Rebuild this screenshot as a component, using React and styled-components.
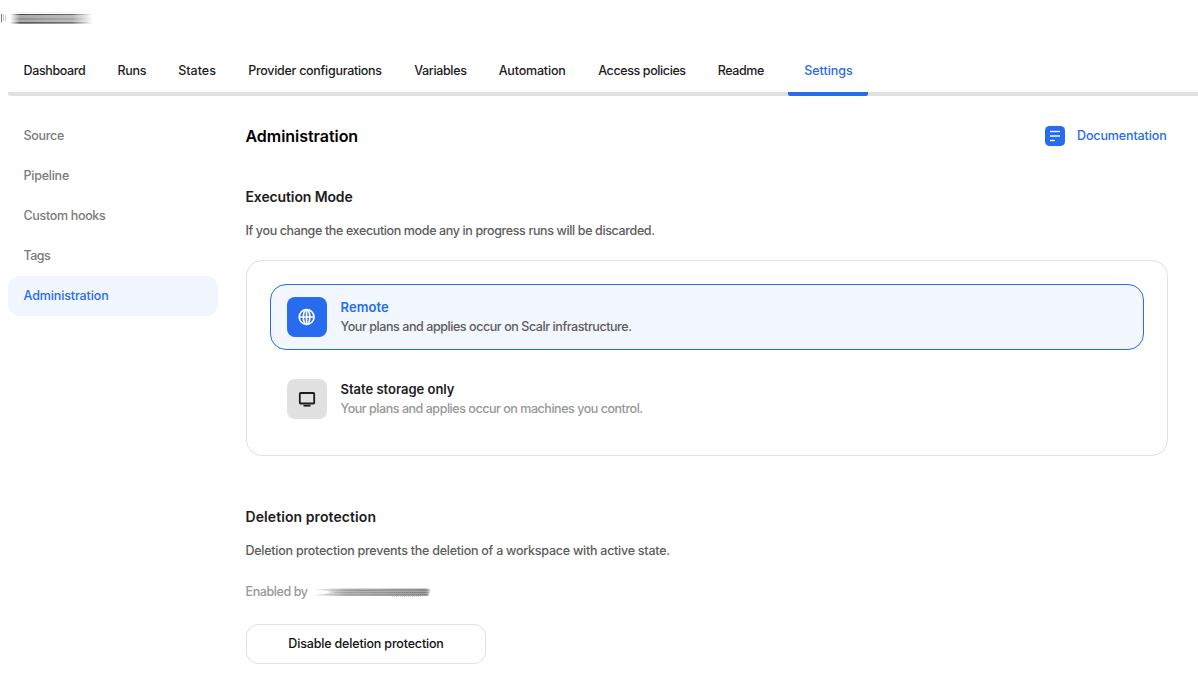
import React from "react";
import styled, { createGlobalStyle } from "styled-components";

const Global = createGlobalStyle`
  * { box-sizing: border-box; }
  body { margin: 0; background: #fff; font-family: Inter, "Liberation Sans", sans-serif; font-size: 12.5px; font-weight: 500; color: #1c1c1e; }
`;

const Page = styled.div`
  height: 690px;
  overflow: hidden;
`;
const Header = styled.header`
  height: 50px;
  padding-top: 10px;
`;
const Tabs = styled.nav`
  display: flex;
  gap: 32px;
  height: 46px;
  margin-left: 8px;
  padding-left: 15.5px;
  border-radius: 2px 0 0 2px;
  background: linear-gradient(#e1e1e1, #e1e1e1) bottom / 100% 4px no-repeat;
`;
const Text = styled.span`
  display: block;
  white-space: nowrap;
  letter-spacing: ${(p) => p.$ls || 0}px;
`;
const RaisedText = styled(Text)`
  padding-bottom: 2px;
`;
const Tab = styled.a`
  width: ${(p) => p.$w}px;
  height: 46px;
  line-height: 42px;
  color: #1c1c1e;
`;
const ActiveTab = styled(Tab)`
  width: 80px;
  margin-left: -8px;
  padding-left: 16px;
  color: #266ced;
  background: linear-gradient(#266ced, #266ced) bottom / 100% 4px no-repeat;
  border-radius: 2px;
`;
const Body = styled.div`
  display: flex;
  padding: 20px 30px 0 8px;
`;
const Side = styled.aside`
  width: 210px;
  margin-right: 28px;
`;
const SideItem = styled.a`
  display: block;
  height: 40px;
  line-height: 40px;
  padding-left: 15.5px;
  border-radius: 12px;
  color: ${(p) => (p.$active ? "#266ced" : "#7b7b7b")};
  background: ${(p) => (p.$active ? "#f0f5fe" : "transparent")};
`;
const Main = styled.main`
  flex: 1;
`;
const TitleRow = styled.div`
  display: flex;
  align-items: center;
  justify-content: space-between;
  height: 40px;
`;
const Title = styled.h1`
  margin: 0 0 0 -0.5px;
  font-size: 16px;
  font-weight: 600;
  color: #000;
`;
const DocLink = styled.a`
  display: flex;
  align-items: center;
  gap: 12px;
  width: 123px;
  color: #266ced;
`;
const Heading = styled.h2`
  margin: ${(p) => p.$top}px 0 0 -0.5px;
  font-size: 14px;
  font-weight: 600;
  line-height: 20px;
`;
const Para = styled.p`
  margin: 14px 0 0 -0.5px;
  line-height: 20px;
  color: #5c5c5c;
`;
const Panel = styled.section`
  height: 196px;
  margin-top: 19px;
  padding: 23px;
  border: 1px solid #e1e1e1;
  border-radius: 16px;
`;
const Option = styled.div`
  display: flex;
  align-items: center;
  gap: 13.5px;
  height: 66px;
  margin-bottom: 16px;
  padding: 0 16px;
  border: 1px solid ${(p) => (p.$active ? "#266ced" : "transparent")};
  border-radius: 16px;
  background: ${(p) => (p.$active ? "#f2f6fe" : "transparent")};
`;
const IconBox = styled.div`
  display: flex;
  align-items: center;
  justify-content: center;
  width: 40px;
  height: 40px;
  border-radius: 8px;
  background: ${(p) => (p.$active ? "#266ced" : "#e1e1e1")};
`;
const OptionTitle = styled.div`
  font-size: 13px;
  font-weight: 600;
  line-height: 19px;
  color: ${(p) => (p.$active ? "#266ced" : "#1c1c1e")};
`;
const OptionText = styled.div`
  line-height: 19px;
  color: ${(p) => (p.$active ? "#5c5c5c" : "#979797")};
`;
const EnabledRow = styled.div`
  display: flex;
  align-items: center;
  height: 20px;
  margin: 21px 0 0 -0.5px;
  color: #979797;
`;
const EnabledLabel = styled.div`
  width: 68px;
`;
const Button = styled.button`
  display: flex;
  align-items: center;
  justify-content: center;
  width: 240px;
  height: 40px;
  margin-top: 22px;
  border: 1px solid #e1e1e1;
  border-radius: 12px;
  background: #fff;
  font: inherit;
  color: #111;
`;

const TABS = [
  ["Dashboard", 62, -0.36],
  ["Runs", 28.7, -0.3],
  ["States", 38, 0],
  ["Provider configurations", 134, -0.28],
  ["Variables", 52.5, -0.35],
  ["Automation", 67.5, -0.18],
  ["Access policies", 87.5, -0.39],
  ["Readme", 46.5, -0.4],
];
const SIDE = [
  ["Source", -0.3],
  ["Pipeline", -0.24],
  ["Custom hooks", -0.33],
  ["Tags", -0.5],
  ["Administration", -0.12],
];

const NameSmudge = () => (
  <svg width="96" height="18" viewBox="0 0 96 18" style={{ display: "block" }}>
    <defs>
      <linearGradient id="nameFade" x1="0" x2="1">
        <stop offset="0" stopColor="#fff" stopOpacity="0" />
        <stop offset="0.12" stopColor="#fff" />
        <stop offset="0.75" stopColor="#fff" stopOpacity="0.8" />
        <stop offset="1" stopColor="#fff" stopOpacity="0" />
      </linearGradient>
      <mask id="nameMask"><rect x="10" width="83" height="18" fill="url(#nameFade)" /></mask>
    </defs>
    <path d="M1.5 4v8" stroke="#777" strokeWidth="1" />
    <path d="M3.5 4v7M5.5 5v6" stroke="#ccc" strokeWidth="1" />
    <g mask="url(#nameMask)">
      <rect x="10" y="2" width="83" height="1" fill="#eee" />
      <rect x="10" y="4" width="83" height="1" fill="#444" />
      <rect x="10" y="5" width="83" height="3" fill="#aaa" />
      <rect x="10" y="8" width="83" height="2" fill="#929292" />
      <rect x="10" y="10" width="83" height="2" fill="#aaa" />
      <rect x="10" y="12" width="83" height="1" fill="#555" />
      <rect x="10" y="13" width="83" height="1" fill="#888" />
    </g>
  </svg>
);
const UserSmudge = () => (
  <svg width="120" height="14" viewBox="0 0 120 14">
    <defs>
      <linearGradient id="userFade" x1="0" x2="1">
        <stop offset="0" stopColor="#fff" stopOpacity="0.1" />
        <stop offset="0.25" stopColor="#fff" stopOpacity="0.75" />
        <stop offset="0.95" stopColor="#fff" />
        <stop offset="1" stopColor="#fff" stopOpacity="0" />
      </linearGradient>
      <mask id="userMask"><rect x="2" width="116" height="14" fill="url(#userFade)" /></mask>
    </defs>
    <g mask="url(#userMask)">
      <path d="M2 4 30 3.5H114L117 5 115 10.5H2L18 7Z" fill="#a3a3a3" />
      <path d="M2 4.5Q40 6 80 5H116" stroke="#777" strokeWidth="1.2" fill="none" />
      <path d="M20 7.5H115" stroke="#808080" strokeWidth="1" />
      <path d="M2 10H114" stroke="#666" strokeWidth="1.2" />
      <path d="M78 11.5H108" stroke="#ccc" strokeWidth="1" strokeDasharray="1 1" />
    </g>
  </svg>
);
const DocIcon = () => (
  <svg width="20" height="20" viewBox="0 0 20 20" fill="none">
    <rect width="20" height="20" rx="4.5" fill="#266ced" />
    <path d="M5 5.5h10" stroke="#fff" strokeWidth="1.3" />
    <path d="M5 10h10" stroke="#fff" strokeWidth="1.6" strokeOpacity="0.9" />
    <path d="M5 14.5h5" stroke="#fff" strokeWidth="1.3" />
  </svg>
);
const GlobeIcon = () => (
  <svg width="18" height="18" viewBox="0 0 18 18" fill="none" stroke="#fff" strokeWidth="1.7">
    <circle cx="8.6" cy="9" r="7.4" />
    <ellipse cx="8.6" cy="9" rx="3.3" ry="7.4" />
    <path d="M1 9h15.2M8.6 1.4v15.2" />
  </svg>
);
const MonitorIcon = () => (
  <svg width="18" height="18" viewBox="0 0 18 18" fill="none" stroke="#1c1c1e">
    <rect x="1.8" y="3" width="14.4" height="10.5" rx="0.8" strokeWidth="1.8" />
    <path d="M5.5 15.7h7" strokeWidth="1.8" />
  </svg>
);

export default function App() {
  return (
    <Page>
      <Global />
      <Header><NameSmudge /></Header>
      <Tabs>
        {TABS.map(([t, w, ls]) => (
          <Tab key={t} $w={w}><Text $ls={ls}>{t}</Text></Tab>
        ))}
        <ActiveTab><Text $ls={-0.02}>Settings</Text></ActiveTab>
      </Tabs>
      <Body>
        <Side>
          {SIDE.map(([t, ls]) => (
            <SideItem key={t} $active={t === "Administration"}><Text $ls={ls}>{t}</Text></SideItem>
          ))}
        </Side>
        <Main>
          <TitleRow>
            <Title><Text $ls={-0.04}>Administration</Text></Title>
            <DocLink><DocIcon /><RaisedText $ls={-0.12}>Documentation</RaisedText></DocLink>
          </TitleRow>
          <Heading $top={31}><Text $ls={-0.12}>Execution Mode</Text></Heading>
          <Para><Text $ls={-0.37}>If you change the execution mode any in progress runs will be discarded.</Text></Para>
          <Panel>
            <Option $active>
              <IconBox $active><GlobeIcon /></IconBox>
              <div>
                <OptionTitle $active><Text $ls={0.07}>Remote</Text></OptionTitle>
                <OptionText $active><Text $ls={-0.425}>Your plans and applies occur on Scalr infrastructure.</Text></OptionText>
              </div>
            </Option>
            <Option>
              <IconBox><MonitorIcon /></IconBox>
              <div>
                <OptionTitle><Text $ls={-0.01}>State storage only</Text></OptionTitle>
                <OptionText><Text $ls={-0.457}>Your plans and applies occur on machines you control.</Text></OptionText>
              </div>
            </Option>
          </Panel>
          <Heading $top={51}><Text $ls={0.08}>Deletion protection</Text></Heading>
          <Para><Text $ls={-0.25}>Deletion protection prevents the deletion of a workspace with active state.</Text></Para>
          <EnabledRow>
            <EnabledLabel><RaisedText $ls={-0.4}>Enabled by</RaisedText></EnabledLabel>
            <UserSmudge />
          </EnabledRow>
          <Button><RaisedText $ls={-0.17}>Disable deletion protection</RaisedText></Button>
        </Main>
      </Body>
    </Page>
  );
}
